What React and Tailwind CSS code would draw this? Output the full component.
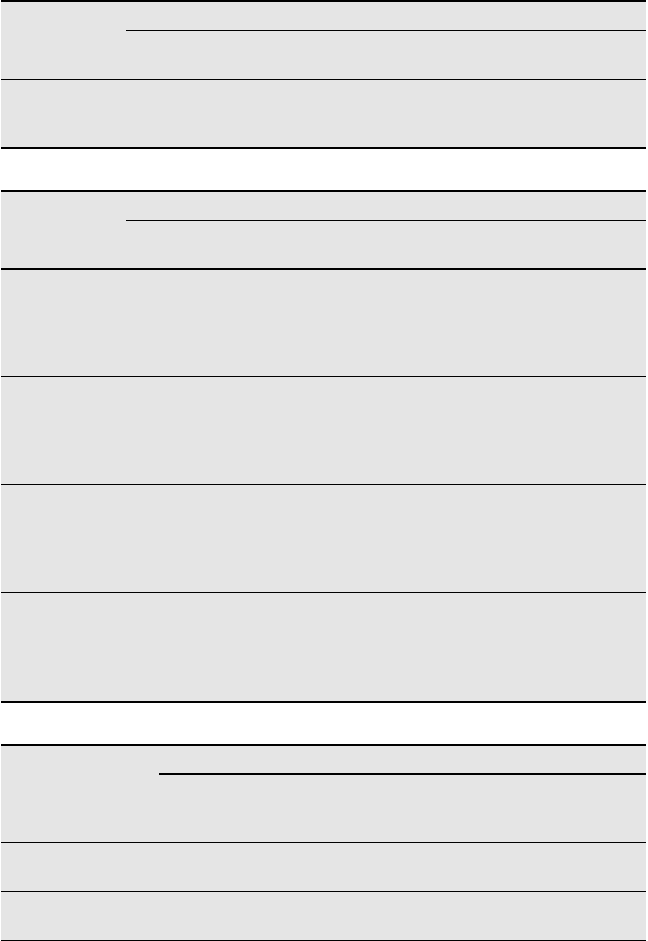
import React from 'react';

// Empty comparison tables: grey bodies, black rules, no content
function Header({ left, top, h, subBorder, bottomBorder }) {
  return (
    <div className={`flex ${bottomBorder}`} style={{ height: h }}>
      <div className="shrink-0" style={{ width: left }} />
      <div className="flex-1 flex flex-col">
        <div className={`border-black ${subBorder}`} style={{ height: top }} />
        <div className="flex-1" />
      </div>
    </div>
  );
}

function Row({ h, border }) {
  return <div className={border} style={{ height: h }} />;
}

export default function App() {
  return (
    <div className="min-h-screen bg-white">
      <div className="ml-[1px] w-[645px]">
        {/* table 1 */}
        <div className="bg-[#e5e5e5] border-t-2 border-black">
          <Header left={125} top={29} h={78} subBorder="border-b" bottomBorder="border-b border-black" />
          <Row h={69} border="border-b-2 border-black" />
        </div>

        {/* table 2 */}
        <div className="mt-[41px] bg-[#e5e5e5] border-t-2 border-black">
          <Header left={125} top={29} h={78} subBorder="border-b" bottomBorder="border-b-2 border-black" />
          <Row h={107} border="border-b border-black" />
          <Row h={108} border="border-b border-black" />
          <Row h={108} border="border-b border-black" />
          <Row h={110} border="border-b-2 border-black" />
        </div>

        {/* table 3 */}
        <div className="mt-[41px] bg-[#e5e5e5] border-t-2 border-black">
          <Header left={158} top={29} h={97} subBorder="border-b-2" bottomBorder="border-b border-black" />
          <Row h={49} border="border-b border-black" />
          <Row h={49} border="border-b border-black" />
        </div>
      </div>
    </div>
  );
}
